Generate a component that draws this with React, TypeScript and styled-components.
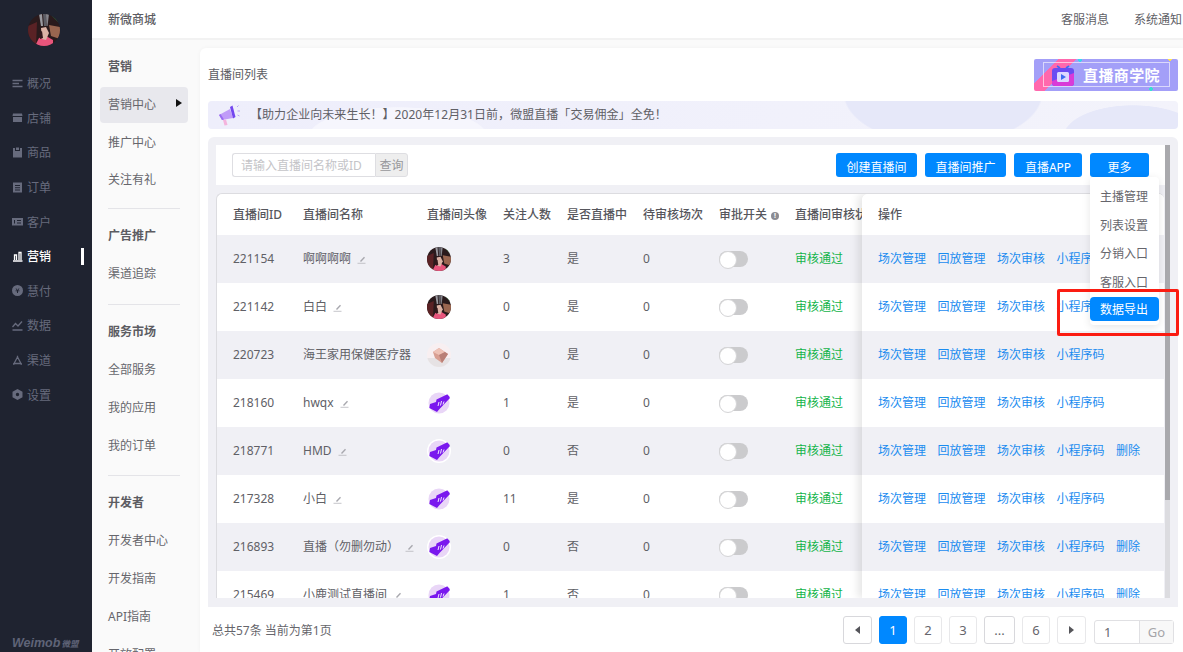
import { ReactElement } from 'react';
import styled, { createGlobalStyle } from 'styled-components';

const GlobalStyle = createGlobalStyle`
  html, body {
    margin: 0;
    height: 100%;
    overflow: hidden;
    background: #fafafa;
    font-family: "Noto Sans", "Noto Sans CJK SC", sans-serif;
    font-size: 12px;
    color: #606066;
  }
  * { box-sizing: border-box; }
`;

const Page = styled.div`
  display: flex;
  height: 652px;
  width: 1183px;
  overflow: hidden;
  position: relative;
`;

const Sidebar = styled.aside`
  width: 92px;
  flex: none;
  background: #1f2330;
  display: flex;
  flex-direction: column;
  align-items: stretch;
  padding-top: 14px;
`;

const SideAvatar = styled.div`
  align-self: center;
  margin-left: -4px;
  width: 32px;
  height: 32px;
  border-radius: 50%;
  overflow: hidden;
  flex: none;
`;

const SideNav = styled.nav`
  margin-top: 20px;
  display: flex;
  flex-direction: column;
`;

const SideItem = styled.div<{ $active?: boolean }>`
  height: 34.6px;
  display: flex;
  align-items: center;
  padding-left: 12px;
  gap: 4px;
  color: ${(p) => (p.$active ? '#ffffff' : '#676b7d')};
  font-weight: ${(p) => (p.$active ? 500 : 400)};
  &::after {
    content: '';
    display: ${(p) => (p.$active ? 'block' : 'none')};
    width: 3px;
    height: 17px;
    background: #fff;
    margin-left: auto;
    margin-right: 8px;
  }
`;

const SideLogo = styled.div`
  margin-top: auto;
  padding: 0 0 2px 12px;
  color: #5f6478;
  font-family: "Liberation Sans", sans-serif;
  font-style: italic;
  font-weight: 700;
  font-size: 12.5px;
  display: flex;
  align-items: baseline;
  gap: 1px;
  span {
    font-family: "Noto Sans CJK SC", sans-serif;
    font-size: 8.5px;
  }
`;

const Body = styled.div`
  flex: 1;
  min-width: 0;
  display: flex;
  flex-direction: column;
`;

const TopBar = styled.header`
  height: 40px;
  flex: none;
  background: #fff;
  border-bottom: 2px solid #f2f2f2;
  display: flex;
  align-items: center;
  padding: 0 1px 0 16px;
  gap: 25px;
`;

const Brand = styled.div`
  margin-right: auto;
  font-weight: 500;
  color: #5c5c62;
`;

const Content = styled.div`
  flex: 1;
  min-height: 0;
  display: flex;
`;

const SubNav = styled.nav`
  width: 108px;
  flex: none;
  padding: 8px 12px 0 8px;
  background: #fafafa;
  overflow: hidden;
`;

const SubHead = styled.div`
  height: 37.85px;
  line-height: 37.85px;
  padding-left: 8px;
  font-weight: 700;
  color: #5c5c62;
`;

const SubItem = styled.div<{ $active?: boolean }>`
  position: relative;
  height: ${(p) => (p.$active ? '36px' : '37.85px')};
  margin: ${(p) => (p.$active ? '0.9px 0' : '0')};
  line-height: ${(p) => (p.$active ? '36px' : '37.85px')};
  padding-left: 8px;
  border-radius: 4px;
  white-space: nowrap;
  background: ${(p) => (p.$active ? '#e8e8ed' : 'transparent')};
  color: #66666c;
`;

const SubArrow = styled.i`
  position: absolute;
  right: 6px;
  top: 12px;
  border-left: 6px solid #111;
  border-top: 4px solid transparent;
  border-bottom: 4px solid transparent;
`;

const SubDivider = styled.hr<{ $tight?: boolean }>`
  border: 0;
  height: 1px;
  background: #e4e4e8;
  margin: ${(p) => (p.$tight ? '9px' : '11px')} 8px 8px 8px;
`;

const Main = styled.main`
  flex: 1;
  min-width: 0;
  margin-top: 8px;
  background: #fff;
  border-radius: 6px 0 0 0;
  box-shadow: 0 0 4px rgba(0, 0, 0, 0.04);
  display: flex;
  flex-direction: column;
  padding: 0 5px 0 8px;
`;

const TitleRow = styled.div`
  height: 53px;
  flex: none;
  display: flex;
  align-items: center;
  justify-content: space-between;
  color: #5c5c62;
`;

const TitleText = styled.span`
  margin-top: -2px;
`;

const Promo = styled.div`
  position: relative;
  width: 144px;
  height: 32px;
  border-radius: 2px;
  overflow: hidden;
  background:
    radial-gradient(circle 2px at 46px 1px, #39d6f0 98%, transparent),
    radial-gradient(circle 2px at 136px 0px, #ffe14d 98%, transparent),
    radial-gradient(circle 2px at 117px 30px, #39e0d0 98%, transparent),
    linear-gradient(135deg, #a39ff8 0 17px, #ff68ad 17px 30px, #a39ff8 30px);
  display: flex;
  align-items: center;
  padding-left: 9px;
`;

const PromoFrame = styled.div`
  width: 127px;
  height: 25px;
  border: 1px solid rgba(255, 255, 255, 0.6);
  display: flex;
  align-items: center;
  padding-left: 7px;
  gap: 8px;
  color: #fff;
  font-family: "Noto Sans CJK SC", sans-serif;
  font-size: 15px;
  font-weight: 700;
  letter-spacing: 0.4px;
  white-space: nowrap;
`;

const Notice = styled.div`
  height: 28px;
  flex: none;
  border-radius: 4px;
  display: flex;
  align-items: center;
  padding-left: 9px;
  gap: 9px;
  color: #606066;
  background:
    radial-gradient(ellipse 100px 52px at 735px -8px, #e6e8f9 98%, transparent 100%),
    radial-gradient(ellipse 90px 30px at 190px 36px, #f6f6fd 98%, transparent 100%),
    radial-gradient(ellipse 70px 32px at 925px 36px, #e6e8f9 98%, transparent 100%),
    linear-gradient(90deg, #eeeefb, #f3f3fb);
`;

const NoticeText = styled.span`
  margin-top: -2px;
  letter-spacing: 0.05px;
`;

const Panel = styled.section`
  flex: 1;
  min-height: 0;
  margin-top: 8px;
  background: #f0f0f5;
  border-radius: 6px 6px 0 0;
  padding: 8px 8px 9px 8px;
  display: flex;
`;

const PanelInner = styled.div`
  flex: 1;
  min-width: 0;
  display: flex;
  flex-direction: column;
  gap: 8px;
`;

const Scrollbar = styled.div`
  width: 5px;
  flex: none;
  background: #dcdce0;
  &::before {
    content: '';
    display: block;
    height: 355px;
    background: #a9a9ad;
  }
`;

const Toolbar = styled.div`
  height: 40px;
  flex: none;
  background: #fff;
  display: flex;
  align-items: center;
  padding: 0 16px;
  gap: 8px;
`;

const Search = styled.div`
  display: flex;
  height: 24px;
  margin-right: auto;
`;

const SearchInput = styled.input`
  width: 143px;
  height: 24px;
  border: 1px solid #dedee2;
  border-right: 0;
  border-radius: 3px 0 0 3px;
  padding: 0 8px;
  font: inherit;
  outline: none;
  &::placeholder { color: #c4c4c8; }
`;

const SearchButton = styled.button`
  width: 33px;
  height: 24px;
  border: 1px solid #dedee2;
  border-radius: 0 3px 3px 0;
  background: #eeeeee;
  color: #97979b;
  font: inherit;
  padding: 0;
`;

const PrimaryButton = styled.button<{ $width: number }>`
  width: ${(p) => p.$width}px;
  height: 24px;
  border: 0;
  border-radius: 3px;
  background: #0088ff;
  color: #fff;
  font: inherit;
  padding: 3px 0 0;
`;

const TableBox = styled.div`
  flex: 1;
  min-height: 0;
  display: flex;
  overflow: hidden;
  background: #fff;
  border: 1px solid #dcdce0;
  border-width: 1px 0 0 1px;
  border-radius: 6px 6px 0 0;
  margin-right: 1px;
`;

const LeftPane = styled.div`
  width: 645px;
  flex: none;
  overflow: hidden;
`;

const RightPane = styled.div`
  flex: 1;
  min-width: 0;
  position: relative;
  box-shadow: -4px 0 8px rgba(0, 0, 0, 0.1);
  border-radius: 6px 0 0 0;
`;

const HeadRow = styled.div`
  height: 41px;
  display: grid;
  grid-template-columns: 86px 124px 76px 64px 76px 76px 76px 100px;
  align-items: center;
  font-weight: 500;
  color: #56565c;
  white-space: nowrap;
`;

const Row = styled.div<{ $striped: boolean }>`
  height: 48px;
  display: grid;
  grid-template-columns: 86px 124px 76px 64px 76px 76px 76px 100px;
  align-items: center;
  background: ${(p) => (p.$striped ? '#f0f0f5' : '#fff')};
  white-space: nowrap;
`;

const Cell = styled.div<{ $first?: boolean }>`
  padding-left: ${(p) => (p.$first ? '16px' : '0')};
  padding-bottom: 2px;
  min-width: 0;
`;

const MediaCell = styled.div`
  min-width: 0;
`;

const HeadInfo = styled.i`
  display: inline-block;
  width: 8px;
  height: 8px;
  margin-left: 4px;
  border-radius: 50%;
  background: #8b8b92;
  color: #fff;
  font-size: 7px;
  font-style: normal;
  font-weight: 700;
  line-height: 8px;
  text-align: center;
  vertical-align: 1px;
`;

const NameCell = styled.div`
  display: flex;
  align-items: center;
  gap: 6px;
  overflow: hidden;
  padding-bottom: 2px;
`;

const NameText = styled.span`
  overflow: hidden;
  flex: none;
  max-width: 108px;
`;

const Avatar = styled.div`
  width: 24px;
  height: 24px;
  border-radius: 50%;
  overflow: hidden;
`;

const Toggle = styled.div`
  width: 29px;
  height: 16px;
  border-radius: 8px;
  background: #cbcbcd;
  &::before {
    content: '';
    display: block;
    width: 16px;
    height: 16px;
    border-radius: 50%;
    background: #fff;
    border: 1px solid #d4d4d6;
  }
`;

const Status = styled.span`
  color: #13b44a;
`;

const OpsHead = styled.div`
  height: 41px;
  display: flex;
  align-items: center;
  padding: 0 0 2px 16px;
  font-weight: 500;
  color: #56565c;
  background: #fff;
  border-radius: 6px 0 0 0;
`;

const OpsRow = styled.div<{ $striped: boolean }>`
  height: 48px;
  display: flex;
  align-items: center;
  padding: 0 0 2px 16px;
  gap: 11.5px;
  background: ${(p) => (p.$striped ? '#f0f0f5' : '#fff')};
  white-space: nowrap;
`;

const OpLink = styled.a`
  color: #1a8cf0;
  cursor: pointer;
`;

const Dropdown = styled.div`
  position: absolute;
  left: 1090px;
  top: 177px;
  width: 69px;
  height: 148px;
  padding-top: 6px;
  background: #fff;
  border-radius: 4px;
  box-shadow: 0 2px 8px rgba(0, 0, 0, 0.1);
  z-index: 2;
`;

const DropItem = styled.div<{ $active?: boolean }>`
  height: ${(p) => (p.$active ? '24px' : '28.5px')};
  line-height: ${(p) => (p.$active ? '26px' : '28.5px')};
  padding-left: 10px;
  border-radius: 4px;
  background: ${(p) => (p.$active ? '#0088ff' : 'transparent')};
  color: ${(p) => (p.$active ? '#fff' : '#66666c')};
`;

const RedMark = styled.div`
  position: absolute;
  left: 1057px;
  top: 289px;
  width: 122px;
  height: 47px;
  border: 3px solid #fb1c12;
  border-radius: 2px;
  z-index: 3;
`;

const Footer = styled.footer`
  height: 45px;
  flex: none;
  margin: 0 -5px 0 -8px;
  background: #fff;
  border-radius: 6px 6px 0 0;
  display: flex;
  align-items: center;
  padding: 0 9px 0 12px;
  color: #66666c;
`;

const Total = styled.div`
  margin-right: auto;
`;

const PageList = styled.div`
  display: flex;
  gap: 7px;
  align-items: flex-start;
  height: 28px;
`;

const PageButton = styled.div<{ $active?: boolean; $width?: number; $strong?: boolean }>`
  width: ${(p) => p.$width ?? 28}px;
  height: 28px;
  border-radius: 3px;
  display: flex;
  align-items: center;
  justify-content: center;
  font-size: 13px;
  background: ${(p) => (p.$active ? '#0088ff' : '#fff')};
  color: ${(p) => (p.$active ? '#fff' : '#66666c')};
  border: 1px solid ${(p) => (p.$active ? '#0088ff' : p.$strong ? '#d8d8dc' : '#e8e8ea')};
`;

const Arrow = styled.i<{ $right?: boolean }>`
  ${(p) => (p.$right ? 'border-left' : 'border-right')}: 5px solid #55555a;
  border-top: 4px solid transparent;
  border-bottom: 4px solid transparent;
`;

const GoBox = styled.div`
  display: flex;
  width: 80px;
  height: 24px;
  margin: 4px 0 0 1px;
  border: 1px solid #e0e0e3;
  border-radius: 3px;
  font-size: 13px;
`;

const GoValue = styled.div`
  flex: 1;
  padding-left: 9px;
  line-height: 22px;
`;

const GoButton = styled.div`
  width: 34px;
  border-left: 1px solid #e0e0e3;
  background: #f8f8f8;
  color: #a5a5a9;
  line-height: 22px;
  text-align: center;
`;

type IconProps = { d: string; fill?: boolean };

function SideIcon({ d, fill }: IconProps): ReactElement {
  return (
    <svg width="11" height="11" viewBox="0 0 11 11" fill={fill ? 'currentColor' : 'none'} fillRule="evenodd" stroke={fill ? 'none' : 'currentColor'} strokeWidth="1.3" style={{ flex: 'none' }}>
      <path d={d} />
    </svg>
  );
}

function Pencil(): ReactElement {
  return (
    <svg width="9" height="9" viewBox="0 0 9 9" style={{ flex: 'none', marginTop: 2 }}>
      <path d="M3 6 L7 1.8 L8 2.8 L4 7 Z" fill="#a8a8ae" />
      <path d="M0.5 8.3 H8.5" stroke="#b8b8be" strokeWidth="0.8" />
    </svg>
  );
}

function PhotoAvatar(): ReactElement {
  return (
    <svg width="100%" height="100%" viewBox="0 0 32 32" style={{ display: 'block' }}>
      <rect width="32" height="32" fill="#2a1a1c" />
      <g style={{ filter: 'blur(0.7px)' }}>
        <path d="M22 0 H32 V10 Z" fill="#2f6e3a" />
        <path d="M0 12 L9 8 L8 32 H0 Z" fill="#5a2225" />
        <path d="M21 11 L32 13 V25 L23 22 Z" fill="#9a6650" />
        <path d="M11 0 H14 L15 12 H13 Z" fill="#9a9aa0" />
        <path d="M15 0 H18 L18 12 H16 Z" fill="#5c5c64" />
        <path d="M18 0 H21 L19.5 12 H18.5 Z" fill="#85858c" />
        <path d="M7 32 L11 24 L18 22 L25 26 L25 32 Z" fill="#e8557c" />
        <path d="M13 14 L18 13 L21 19 L18 26 L14 25 Z" fill="#dcb3a6" />
        <path d="M11 19 L14 17 L15 24 L12 25 Z" fill="#33191c" />
      </g>
    </svg>
  );
}

function GemAvatar(): ReactElement {
  return (
    <svg width="100%" height="100%" viewBox="0 0 24 24" style={{ display: 'block' }}>
      <rect width="24" height="24" fill="#f8eff1" />
      <rect y="15" width="24" height="9" fill="#e6e2e4" />
      <g style={{ filter: 'blur(0.4px)' }}>
        <path d="M6 9 L12 5 L21 11 L15 20 L8 15 Z" fill="#d99f92" />
        <path d="M6 9 L12 5 L18 9 L12 12 Z" fill="#eec2b6" />
        <path d="M12 12 L18 9 L21 11 L15 20 Z" fill="#b97f76" />
      </g>
    </svg>
  );
}

function HornAvatar(): ReactElement {
  return (
    <svg width="100%" height="100%" viewBox="0 0 24 24" style={{ display: 'block' }}>
      <rect width="24" height="24" fill="#fff" />
      <circle cx="12" cy="12" r="10.5" fill="#e9d6f7" />
      <path d="M23 2 V7 L12.5 18 L10 21 L2.3 17 L3 13 L9 11 L9.5 8.5 Z" fill="#7a18ee" />
      <path d="M11 15 L12 11 M13.5 14.5 L14.5 10 M16 13.5 L17 10.5" stroke="#fff" strokeWidth="0.9" fill="none" />
    </svg>
  );
}

function NoticeHorn(): ReactElement {
  return (
    <svg width="24" height="24" viewBox="0 0 24 24" style={{ flex: 'none' }}>
      <g style={{ filter: 'blur(0.4px)' }}>
        <path d="M2 12 L13 6 L16 15 L5 17 Z" fill="#c09cf8" />
        <path d="M2 12 L5 17 L7 16.5 L3.5 11 Z" fill="#9a6cf2" />
        <path d="M13 4 L15.5 2.5 L18.5 14 L16 15.5 Z" fill="#7346ef" />
        <path d="M6 17 L9 16.5 L10.5 22 L7.5 22.5 Z" fill="#f4b3dd" />
        <path d="M20 4 L21.5 2.5 M20.5 8 H23 M20.5 12 L22.5 13" stroke="#b9a2f6" strokeWidth="1" />
      </g>
    </svg>
  );
}

function TvIcon(): ReactElement {
  return (
    <svg width="24" height="24" viewBox="0 0 24 24" style={{ flex: 'none' }}>
      <path d="M6 3 L9 5 M18 3 L15 5" stroke="#3d6cf2" strokeWidth="1.6" />
      <rect x="1" y="5" width="22" height="18" rx="3" fill="#6a4cf2" />
      <path d="M1 18 L23 10 V20 A3 3 0 0 1 20 23 H4 A3 3 0 0 1 1 20 Z" fill="#d93bd8" />
      <rect x="6" y="9" width="12" height="10" rx="1.5" fill="#dcd8ff" />
      <path d="M10 11 L15 14 L10 17 Z" fill="#3d6cf2" />
    </svg>
  );
}

const sideItems: { label: string; d: string; fill?: boolean; active?: boolean }[] = [
  { label: '概况', d: 'M0.5 2.5 H10.5 M0.5 5.5 H7 M0.5 8.5 H10.5' },
  { label: '店铺', d: 'M1 1.5 H10 L10.5 4 H0.5 Z M1 5 H10 V10 H1 Z', fill: true },
  { label: '商品', d: 'M1 1 H3 V4 H8 V1 H10 V10.5 H1 Z M4 0.5 H7 V3 H4 Z', fill: true },
  { label: '订单', d: 'M1 0.5 H10 V10.5 H1 Z M3 3 V4 H8 V3 Z M3 5.2 V6.2 H8 V5.2 Z M3 7.4 V8.4 H8 V7.4 Z', fill: true },
  { label: '客户', d: 'M0 2 H11 V9.5 H0 Z M2 4 V7.5 H3 V4 Z M5 4 V5 H9 V4 Z M5 6.5 V7.5 H9 V6.5 Z', fill: true },
  { label: '营销', d: 'M1 10 H10.5 M2.5 9 V4 H4.5 V9 M7 9 V1.5 H9 V9', active: true },
  { label: '慧付', d: 'M5.5 0 A5.5 5.5 0 1 0 5.5 11 A5.5 5.5 0 1 0 5.5 0 Z M3.5 3.5 L5 5.5 H3.5 V6.3 H5 V8 H6 V6.3 H7.5 V5.5 H6 L7.5 3.5 H6.6 L5.5 5 L4.4 3.5 Z', fill: true },
  { label: '数据', d: 'M0.5 10 H10.5 M0.5 7 L3.5 3.5 L6 6 L10 1.5' },
  { label: '渠道', d: 'M5.5 2 L9 8.5 H2 Z M5.5 0.8 V2.5 M1 9 H2.5 M8.5 9 H10' },
  { label: '设置', d: 'M5.5 0 L10.5 2.7 V8.3 L5.5 11 L0.5 8.3 V2.7 Z M5.5 3.8 A1.7 1.7 0 1 0 5.5 7.2 A1.7 1.7 0 1 0 5.5 3.8 Z', fill: true },
];

type RoomRow = {
  id: string;
  name: string;
  edit: boolean;
  avatar: 'photo' | 'gem' | 'horn';
  fans: string;
  live: string;
  remove: boolean;
};

const rooms: RoomRow[] = [
  { id: '221154', name: '啊啊啊啊', edit: true, avatar: 'photo', fans: '3', live: '是', remove: false },
  { id: '221142', name: '白白', edit: true, avatar: 'photo', fans: '0', live: '是', remove: false },
  { id: '220723', name: '海王家用保健医疗器', edit: false, avatar: 'gem', fans: '0', live: '是', remove: false },
  { id: '218160', name: 'hwqx', edit: true, avatar: 'horn', fans: '1', live: '是', remove: false },
  { id: '218771', name: 'HMD', edit: true, avatar: 'horn', fans: '0', live: '否', remove: true },
  { id: '217328', name: '小白', edit: true, avatar: 'horn', fans: '11', live: '是', remove: false },
  { id: '216893', name: '直播（勿删勿动）', edit: true, avatar: 'horn', fans: '0', live: '否', remove: true },
  { id: '215469', name: '小鹿测试直播间', edit: true, avatar: 'horn', fans: '1', live: '否', remove: true },
];

function RoomAvatar({ kind }: { kind: RoomRow['avatar'] }): ReactElement {
  return (
    <Avatar>
      {kind === 'photo' ? <PhotoAvatar /> : kind === 'gem' ? <GemAvatar /> : <HornAvatar />}
    </Avatar>
  );
}

function RoomTable(): ReactElement {
  return (
    <TableBox>
      <LeftPane>
        <HeadRow>
          <Cell $first>直播间ID</Cell>
          <Cell>直播间名称</Cell>
          <Cell>直播间头像</Cell>
          <Cell>关注人数</Cell>
          <Cell>是否直播中</Cell>
          <Cell>待审核场次</Cell>
          <Cell>
            审批开关<HeadInfo>!</HeadInfo>
          </Cell>
          <Cell>直播间审核状态</Cell>
        </HeadRow>
        {rooms.map((room, i) => (
          <Row key={room.id} $striped={i % 2 === 0}>
            <Cell $first>{room.id}</Cell>
            <NameCell>
              <NameText>{room.name}</NameText>
              {room.edit && <Pencil />}
            </NameCell>
            <MediaCell>
              <RoomAvatar kind={room.avatar} />
            </MediaCell>
            <Cell>{room.fans}</Cell>
            <Cell>{room.live}</Cell>
            <Cell>0</Cell>
            <MediaCell>
              <Toggle />
            </MediaCell>
            <Cell>
              <Status>审核通过</Status>
            </Cell>
          </Row>
        ))}
      </LeftPane>
      <RightPane>
        <OpsHead>操作</OpsHead>
        {rooms.map((room, i) => (
          <OpsRow key={room.id} $striped={i % 2 === 0}>
            <OpLink>场次管理</OpLink>
            <OpLink>回放管理</OpLink>
            <OpLink>场次审核</OpLink>
            <OpLink>小程序码</OpLink>
            {room.remove && <OpLink>删除</OpLink>}
          </OpsRow>
        ))}
      </RightPane>
    </TableBox>
  );
}

export default function App(): ReactElement {
  return (
    <Page>
      <GlobalStyle />
      <Sidebar>
        <SideAvatar>
          <PhotoAvatar />
        </SideAvatar>
        <SideNav>
          {sideItems.map((item) => (
            <SideItem key={item.label} $active={item.active}>
              <SideIcon d={item.d} fill={item.fill} />
              {item.label}
            </SideItem>
          ))}
        </SideNav>
        <SideLogo>
          Weimob <span>微盟</span>
        </SideLogo>
      </Sidebar>
      <Body>
        <TopBar>
          <Brand>新微商城</Brand>
          <span>客服消息</span>
          <span>系统通知</span>
        </TopBar>
        <Content>
          <SubNav>
            <SubHead>营销</SubHead>
            <SubItem $active>
              营销中心
              <SubArrow />
            </SubItem>
            <SubItem>推广中心</SubItem>
            <SubItem>关注有礼</SubItem>
            <SubDivider $tight />
            <SubHead>广告推广</SubHead>
            <SubItem>渠道追踪</SubItem>
            <SubDivider />
            <SubHead>服务市场</SubHead>
            <SubItem>全部服务</SubItem>
            <SubItem>我的应用</SubItem>
            <SubItem>我的订单</SubItem>
            <SubDivider />
            <SubHead>开发者</SubHead>
            <SubItem>开发者中心</SubItem>
            <SubItem>开发指南</SubItem>
            <SubItem>API指南</SubItem>
            <SubItem>开放配置</SubItem>
          </SubNav>
          <Main>
            <TitleRow>
              <TitleText>直播间列表</TitleText>
              <Promo>
                <PromoFrame>
                  <TvIcon />
                  直播商学院
                </PromoFrame>
              </Promo>
            </TitleRow>
            <Notice>
              <NoticeHorn />
              <NoticeText>【助力企业向未来生长！】2020年12月31日前，微盟直播「交易佣金」全免！</NoticeText>
            </Notice>
            <Panel>
              <PanelInner>
                <Toolbar>
                  <Search>
                    <SearchInput placeholder="请输入直播间名称或ID" />
                    <SearchButton>查询</SearchButton>
                  </Search>
                  <PrimaryButton $width={81}>创建直播间</PrimaryButton>
                  <PrimaryButton $width={81}>直播间推广</PrimaryButton>
                  <PrimaryButton $width={68}>直播APP</PrimaryButton>
                  <PrimaryButton $width={59}>更多</PrimaryButton>
                </Toolbar>
                <RoomTable />
              </PanelInner>
              <Scrollbar />
            </Panel>
            <Footer>
              <Total>总共57条 当前为第1页</Total>
              <PageList>
                <PageButton $width={29} $strong>
                  <Arrow />
                </PageButton>
                <PageButton $active>1</PageButton>
                <PageButton>2</PageButton>
                <PageButton>3</PageButton>
                <PageButton $width={31} $strong>...</PageButton>
                <PageButton>6</PageButton>
                <PageButton $width={29}>
                  <Arrow $right />
                </PageButton>
                <GoBox>
                  <GoValue>1</GoValue>
                  <GoButton>Go</GoButton>
                </GoBox>
              </PageList>
            </Footer>
          </Main>
        </Content>
      </Body>
      <Dropdown>
        <DropItem>主播管理</DropItem>
        <DropItem>列表设置</DropItem>
        <DropItem>分销入口</DropItem>
        <DropItem>客服入口</DropItem>
        <DropItem $active>数据导出</DropItem>
      </Dropdown>
      <RedMark />
    </Page>
  );
}
